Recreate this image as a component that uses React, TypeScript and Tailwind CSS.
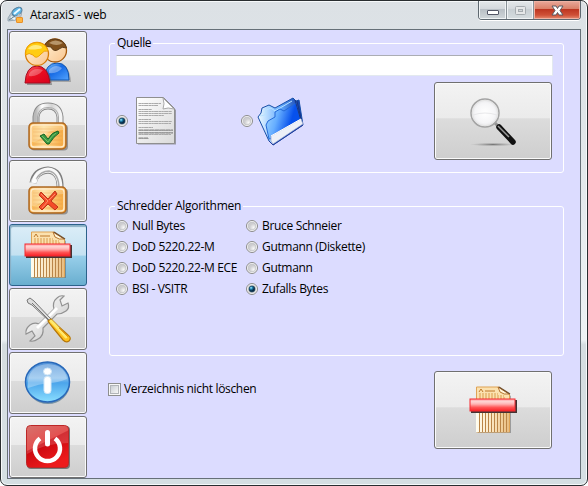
import React, { useState } from "react";

const silver =
  "border-[#707070] bg-[linear-gradient(to_bottom,#f3f3f3_0%,#ebebeb_46%,#dcdcdc_47%,#cecece_100%)] shadow-[inset_0_0_0_1px_#fafafa]";
const pressed =
  "border-[#2c628b] bg-[linear-gradient(to_bottom,#dceef8_0%,#c4e1f1_50%,#98cfea_52%,#69aecf_100%)] shadow-[inset_1px_2px_1px_#8ab0c5]";

function Users() {
  return (
    <svg width="48" height="50" viewBox="0 0 48 50">
      <defs>
        <linearGradient id="blueBody" x1="0" y1="0" x2="1" y2="1">
          <stop stopColor="#8fd0ff" /><stop offset=".45" stopColor="#1569e4" /><stop offset="1" stopColor="#53a4ff" />
        </linearGradient>
        <linearGradient id="redBody" x1="0" y1="0" x2="1" y2="1">
          <stop stopColor="#ff6a70" /><stop offset=".45" stopColor="#ea0f22" /><stop offset="1" stopColor="#d8001d" />
        </linearGradient>
        <linearGradient id="face" x1="0" y1="0" x2="1" y2="1">
          <stop stopColor="#fff3d8" /><stop offset="1" stopColor="#f9c48d" />
        </linearGradient>
      </defs>
      <path d="M20 43Q21 25 33 25T46 43Z" fill="#777" opacity=".5" transform="translate(1 1)" />
      <path d="M20 42Q21 25 33 25T45 42Z" fill="url(#blueBody)" stroke="#1054ae" />
      <path d="M25 32Q31 25 38 30Q34 36 25 35Z" fill="#fff" opacity=".35" />
      <circle cx="31" cy="12.500" r="11.500" fill="url(#face)" stroke="#a65a0c" strokeWidth="1.300" />
      <path d="M20 9Q23 1 31 1Q41 2 42.500 10Q38 8 35 11Q30 15 27 9Q23 8 20 9Z" fill="#80501c" stroke="#5c3c1b" />
      <path d="M25 5Q31 0 39 5Q33 9 25 5Z" fill="#ceb28b" opacity=".7" />
      <path d="M2 46Q3 28 14 28T27 46Z" fill="#555" opacity=".5" transform="translate(1 1)" />
      <path d="M1 45Q2 28 13 28T26 45Z" fill="url(#redBody)" stroke="#a40d20" />
      <path d="M5 36Q9 29 19 32Q14 39 5 38Z" fill="#fff" opacity=".28" />
      <circle cx="13" cy="16" r="11.500" fill="url(#face)" stroke="#d77b08" strokeWidth="1.300" />
      <path d="M1.500 17Q1 5 13 4.500Q22 5 24 13Q20 12 17 16Q12 22 9 17Q5 14 1.500 17Z" fill="#ffcc12" stroke="#f1a100" />
      <path d="M4 11Q8 5 17 8Q20 11 14 11Q8 12 4 11Z" fill="#fff7ac" opacity=".7" />
    </svg>
  );
}

function Lock({ open = false }: { open?: boolean }) {
  return (
    <svg width="42" height="50" viewBox="0 0 42 50">
      <defs>
        <linearGradient id="gold" x1="0" y1="0" x2="1" y2="0">
          <stop stopColor="#f8b049" /><stop offset=".4" stopColor="#ffdf9b" /><stop offset="1" stopColor="#f5a437" />
        </linearGradient>
        <linearGradient id="silverRod" x1="0" y1="0" x2="1" y2="0">
          <stop stopColor="#b9b9b9" /><stop offset=".25" stopColor="#fff" /><stop offset=".65" stopColor="#d4d4d4" /><stop offset="1" stopColor="#f4f4f4" />
        </linearGradient>
      </defs>
      {open ? (
        <>
          <path d="M6 17Q8 5 21 4Q34 5 33 23" fill="none" stroke="#7e7e7e" strokeWidth="7" />
          <path d="M7 17Q9 5 21 4Q33 5 33 23" fill="none" stroke="#f8f8f8" strokeWidth="5" />
          <path d="M9 13Q14 5 22 5Q32 7 32 23" fill="none" stroke="#aaa" strokeWidth="1.500" />
          <path d="M3 17Q5 10 10 8Q10 12 8 17Z" fill="#fff" opacity=".6" />
        </>
      ) : (
        <>
          <path d="M9 24V15Q10 4 21 4Q32 4 33 15V24" fill="none" stroke="#8b8b8b" strokeWidth="7" />
          <path d="M9 24V15Q10 4 21 4Q32 4 33 15V24" fill="none" stroke="url(#silverRod)" strokeWidth="5" />
          <path d="M10.500 21V15Q11.500 5.500 21 5.500Q31 5.500 31.500 15V21" fill="none" stroke="#aaa" />
        </>
      )}
      <rect x="3.500" y="22.500" width="37.500" height="26" rx="4" fill="#777" opacity=".7" />
      <rect x="2" y="21" width="37" height="26" rx="4" fill="url(#gold)" stroke="#ad6823" strokeWidth="1.500" />
      <rect x="4" y="23" width="33" height="22" rx="3" fill="none" stroke="#ffeccc" strokeWidth="1.500" />
      <path d="M6 27H35M6 30H35M6 34H35M6 38H35M6 42H35" stroke="#eda14b" strokeWidth="1" opacity=".65" />
      <path d="M5 24H36V28Q22 27 16 34Q11 40 5 40Z" fill="#fff5d8" opacity=".3" />
      {open ? (
        <>
          <path d="M14 26L21 33L28 25L30 28L24 35L31 41L28 44L21 38L15 44L12 41L18 35L12 29Z" fill="#f44b29" stroke="#bd3418" strokeLinejoin="round" />
          <path d="M14 28L21 35L15 42M28 28L22 34" stroke="#ff8b66" fill="none" />
        </>
      ) : (
        <>
          <path d="M13 34L17 32L21 37Q25 30 31 29L32 31Q27 34 22 42L20 42Z" fill="#399b45" stroke="#176322" strokeLinejoin="round" />
          <path d="M15 34L21 40Q25 33 29 31" stroke="#79bd65" fill="none" />
        </>
      )}
    </svg>
  );
}

function Shredder() {
  return (
    <svg width="48" height="48" viewBox="0 0 48 48">
      <defs>
        <linearGradient id="redBar" x1="0" y1="0" x2="0" y2="1">
          <stop stopColor="#ff9c9e" /><stop offset=".22" stopColor="#ffd4d3" /><stop offset=".42" stopColor="#ffb3b3" /><stop offset=".7" stopColor="#ff5555" /><stop offset="1" stopColor="#f91f25" />
        </linearGradient>
        <linearGradient id="shreds"><stop stopColor="#fffdf0" /><stop offset=".5" stopColor="#fae5bf" /><stop offset="1" stopColor="#e9bd80" /></linearGradient>
      </defs>
      <path d="M9 2H30L42 10V47H9Z" fill="#555" opacity=".45" />
      <path d="M7.500 1H29.500L40.500 8V46H7.500Z" fill="#fbe1af" stroke="#dfa354" />
      <path d="M29 1L31 6Q35 9 40 8Z" fill="#fff5d8" stroke="#b7752e" />
      <path d="M30 1L41 8" stroke="#725030" strokeWidth="1.300" />
      <path d="M10 6L12 3L14 6M16 5H26" fill="none" stroke="#bd792b" />
      <path d="M10 8H29M10 10H35M10 12H36" fill="none" stroke="#d99c4b" strokeDasharray="2 1" />
      <rect x="7" y="26" width="33" height="20" fill="url(#shreds)" />
      <path d="M10.500 27V46M13.500 27V46M16.500 27V46M19.500 27V46M22.500 27V46M25.500 27V46M28.500 27V46M31.500 27V46M34.500 27V46M37.500 27V46" stroke="#ba8547" strokeWidth="1" />
      <rect x="2" y="14" width="46" height="13" fill="#443332" />
      <rect x="1" y="13" width="45" height="12" fill="url(#redBar)" stroke="#f42b31" />
    </svg>
  );
}

function Tools() {
  return (
    <svg width="48" height="50" viewBox="0 0 48 50">
      <defs><linearGradient id="steel" x1="0" y1="0" x2="1" y2="1"><stop stopColor="#fff" /><stop offset=".5" stopColor="#e5e5e5" /><stop offset="1" stopColor="#b5b5b5" /></linearGradient></defs>
      <path d="M30 15Q28 8 33 4Q36 1 40 2L36 6L38 12L44 9Q46 14 42 17Q38 20 33 20L19 34Q20 42 14 45Q10 48 6 47L11 42L8 37L2 40Q1 35 6 31Q10 28 15 30Z" fill="url(#steel)" stroke="#929292" strokeWidth="1.200" />
      <path d="M13 34L33 14" stroke="#fff" strokeWidth="3" />
      <path d="M3 6L6 4L10 7L27 25L25 27L8 11L4 9Z" fill="#ddd" stroke="#777" />
      <path d="M8 9L26 27" stroke="#777" />
      <path d="M24 27L27 25L31 29L34 32L44 41Q48 44 45 47Q42 49 39 46L30 35L26 30Z" fill="#ffc11d" stroke="#b77808" strokeWidth="1.200" />
      <path d="M27 27L31 31L42 43" fill="none" stroke="#ffe96d" strokeWidth="3" strokeLinecap="round" />
      <path d="M35 34L44 43" stroke="#e99a10" />
    </svg>
  );
}

function Info() {
  return (
    <svg width="48" height="48" viewBox="0 0 48 48">
      <defs><linearGradient id="infoBlue" x1="0" y1="0" x2="0" y2="1"><stop stopColor="#4b8cd5" /><stop offset=".4" stopColor="#83bcec" /><stop offset=".52" stopColor="#4ca5eb" /><stop offset="1" stopColor="#8bdfff" /></linearGradient></defs>
      <ellipse cx="24" cy="24.500" rx="22" ry="20.500" fill="#7893a5" />
      <ellipse cx="23.500" cy="23" rx="22" ry="20" fill="url(#infoBlue)" stroke="#2868b9" strokeWidth="1.500" />
      <path d="M4 22Q6 6 24 5Q41 6 43 20Q33 24 25 24Q15 25 4 29Z" fill="#fff" opacity=".3" />
      <ellipse cx="23.500" cy="12.500" rx="4" ry="3.500" fill="#fff" stroke="#d0e6f7" />
      <rect x="20" y="17.500" width="7" height="17" rx="3" fill="#fff" stroke="#d0e6f7" />
    </svg>
  );
}

function Power() {
  return (
    <svg width="46" height="46" viewBox="0 0 46 46">
      <defs><linearGradient id="powerRed" x1="0" y1="0" x2=".5" y2="1"><stop stopColor="#cf5751" /><stop offset=".48" stopColor="#df3130" /><stop offset=".5" stopColor="#c9080f" /><stop offset="1" stopColor="#ed1b1c" /></linearGradient></defs>
      <rect x="2" y="2" width="43" height="43" rx="4" fill="#777" />
      <rect x="1.500" y="1.500" width="42" height="42" rx="4" fill="url(#powerRed)" stroke="#bc2727" />
      <path d="M2 5Q2 2 5 2H40Q43 2 43 5V19Q21 19 2 30Z" fill="#fff" opacity=".16" />
      <path d="M15 14.500A12.500 12.500 0 1 0 30 14.500" fill="none" stroke="#fff" strokeWidth="4.500" />
      <path d="M22.500 8.500V20" stroke="#fff" strokeWidth="5" strokeLinecap="round" />
    </svg>
  );
}

function Paper() {
  return (
    <svg width="41" height="48" viewBox="0 0 41 48">
      <defs><linearGradient id="paperGray" x1="0" y1="0" x2="1" y2="1"><stop stopColor="#fff" /><stop offset="1" stopColor="#dadada" /></linearGradient></defs>
      <path d="M2 2H29L40 13V47.500H2Z" fill="#777" opacity=".65" />
      <path d="M.5.5H27.500L38.500 11.500V46.500H.5Z" fill="url(#paperGray)" stroke="#8f8f8f" />
      <path d="M27 1Q29 7 27 12Q32 10 38 12Z" fill="#fff" stroke="#aaa" />
      <path d="M2.500 6.500H25M2.500 8.500H22M2.500 12.500H16M2.500 14.500H36M2.500 16.500H36M2.500 18.500H28M2.500 22.500H15M2.500 24.500H36M2.500 26.500H35M2.500 30.500H17M2.500 33.500H37M2.500 35.500H37M2.500 37.500H35M2.500 41.500H13" stroke="#aaa" strokeWidth="1.200" strokeDasharray="3 .3 2 .3 4 .4" />
      <path d="M2.500 33H37M2.500 36H37M2.500 41H12" stroke="#888" strokeWidth="1" strokeDasharray="5 .4" />
    </svg>
  );
}

function Folder() {
  return (
    <svg width="48" height="49" viewBox="0 0 48 49">
      <defs>
        <linearGradient id="folderFront" x1="0" y1="0" x2="1" y2=".3"><stop stopColor="#a9dcff" /><stop offset=".4" stopColor="#66aeff" /><stop offset=".8" stopColor="#0751ec" /></linearGradient>
        <linearGradient id="folderBack" x1="0" y1="0" x2="1" y2="0"><stop stopColor="#edfaff" /><stop offset=".5" stopColor="#61aaff" /><stop offset="1" stopColor="#062c9f" /></linearGradient>
      </defs>
      <path d="M1 20L4 16L5 11L12 8L18 11L36 1L39 4L42 3L46 28L16 48L12 44Z" fill="url(#folderBack)" stroke="#174fa7" />
      <path d="M3 19L8 18L9 13L14 11L18 14L35 4" fill="none" stroke="#b8e3ff" />
      <path d="M12 42L9 28L11 24L18 20L18 15L23 12L27 14L39 6L44 24L18 41Z" fill="url(#folderFront)" stroke="#2469d7" />
      <path d="M38 3L45 27M40 4L44 22" stroke="#183785" />
      <path d="M14 39L44 22L46 27L16 47L14 44Z" fill="#edf0f7" stroke="#9caad1" strokeWidth=".8" />
      <path d="M14 39L44 22" stroke="#fff" />
      <path d="M12 44L16 48L46 28" fill="none" stroke="#253e9d" />
    </svg>
  );
}

function Magnifier() {
  return (
    <svg width="50" height="50" viewBox="0 0 50 50" className="ml-[3px] mt-[2px]">
      <defs>
        <radialGradient id="glass"><stop stopColor="#fff" /><stop offset=".7" stopColor="#f5f5f7" /><stop offset="1" stopColor="#e5e5e7" /></radialGradient>
        <radialGradient id="glassShadow"><stop stopColor="#777" /><stop offset="1" stopColor="#999" stopOpacity="0" /></radialGradient>
      </defs>
      <ellipse cx="23" cy="47.500" rx="23" ry="1.800" fill="url(#glassShadow)" />
      <path d="M25 26L30 31" stroke="#929292" strokeWidth="3" />
      <path d="M29 30L43 45" stroke="#111" strokeWidth="5.500" strokeLinecap="round" />
      <path d="M28 29L39 40" stroke="#999" strokeWidth="1.500" />
      <circle cx="15" cy="16" r="14" fill="url(#glass)" stroke="#a3a3a3" strokeWidth="1.500" />
      <circle cx="15" cy="16" r="12.700" fill="none" stroke="#e4e4e4" />
      <path d="M3 18Q15 14 27 18" fill="none" stroke="#e8e8ea" />
    </svg>
  );
}

function Radio({ selected, label, onSelect, children }: { selected: boolean; label?: string; onSelect: () => void; children?: React.ReactNode }) {
  return (
    <button role="radio" aria-checked={selected} onClick={onSelect} className="flex h-[21px] items-center whitespace-nowrap text-left">
      <svg width="12" height="12" viewBox="0 0 12 12" className="shrink-0">
        <defs>
          <radialGradient id="radioGray" cx=".7" cy=".7"><stop stopColor="#f8f8f8" /><stop offset="1" stopColor="#cdcdd0" /></radialGradient>
          <radialGradient id="radioBlue" cx=".35" cy=".3"><stop stopColor="#b7eeff" /><stop offset=".45" stopColor="#1e89b8" /><stop offset="1" stopColor="#092d49" /></radialGradient>
        </defs>
        <circle cx="6" cy="6" r="5.500" fill="#fbfbfb" stroke="#8b8b8b" />
        <circle cx="6" cy="6" r="3.900" fill="url(#radioGray)" stroke="#bfc0c3" strokeWidth=".7" />
        {selected && <circle cx="6" cy="6" r="3" fill="url(#radioBlue)" stroke="#163b55" strokeWidth=".6" />}
      </svg>
      {label ? <span className="ml-1">{label}</span> : children}
    </button>
  );
}

const entries = [
  { name: "Benutzer", icon: <Users /> },
  { name: "Verschlüsseln", icon: <Lock /> },
  { name: "Entschlüsseln", icon: <Lock open /> },
  { name: "Schreddern", icon: <Shredder /> },
  { name: "Einstellungen", icon: <Tools /> },
  { name: "Information", icon: <Info /> },
  { name: "Beenden", icon: <Power /> },
];

export default function App() {
  const [page, setPage] = useState(3);
  const [source, setSource] = useState(0);
  const [algorithm, setAlgorithm] = useState("Zufalls Bytes");
  const [keep, setKeep] = useState(false);
  const algorithms = ["Null Bytes", "DoD 5220.22-M", "DoD 5220.22-M ECE", "BSI - VSITR", "Bruce Schneier", "Gutmann (Diskette)", "Gutmann", "Zufalls Bytes"];
  return (
    <div className="h-[486px] w-[588px] bg-white font-['Open_Sans','Noto_Sans',sans-serif] text-[12px] leading-4 tracking-[-0.33px] text-black">
      <div className="flex h-full flex-col rounded-[7px] border border-[#292d30] bg-[linear-gradient(to_bottom,#dce1e5_0%,#dfe5e8_25%,#edf2f4_70%,#d5dde0_71%,#d5dfe3_100%)] px-[6px] pb-[6px] shadow-[inset_0_0_0_1px_#f6f9fa]">
        <header className="flex h-7 shrink-0 items-start justify-between">
          <div className="flex h-7 items-center">
            <svg width="18" height="18" viewBox="0 0 18 18">
              <path d="M1 12L6 4L12 1L15 4L14 10L9 14L1 15Z" fill="#b7c4cd" stroke="#98a9b5" />
              <ellipse cx="10" cy="5.500" rx="5.500" ry="3.500" transform="rotate(-35 10 5.500)" fill="#5eb6e5" stroke="#547e9d" />
              <path d="M7 8L13 3M4 11L8 13" stroke="#edfaff" strokeWidth="2" /><path d="M2 14L8 10" stroke="#637d8d" />
              <rect x="9.500" y="11.500" width="6" height="5" rx=".5" fill="#ffb640" stroke="#e8912b" />
              <path d="M11 11V9Q12.500 7 14 9V11" fill="none" stroke="#c7c7c7" />
            </svg>
            <span className="ml-[5px] tracking-[-0.22px]">AtaraxiS - web</span>
          </div>
          <div className="flex h-[19px] w-[103px] overflow-hidden rounded-b-[4px] border border-t-0 border-[#5e6870] shadow-[0_1px_0_#fff]">
            <button aria-label="Minimieren" className="flex w-[28px] items-center justify-center border-r border-[#889197] bg-[linear-gradient(to_bottom,#e4e8ea_0%,#d3d8dc_45%,#b8bfc5_46%,#d1d7da_100%)] pt-[5px] shadow-[inset_0_0_0_1px_#f0f3f5]">
              <svg width="12" height="5" viewBox="0 0 12 5"><rect x=".5" y=".5" width="11" height="4" rx=".5" fill="#fff" stroke="#535666" /></svg>
            </button>
            <button aria-label="Maximieren" className="flex w-[27px] items-center justify-center border-r border-[#889197] bg-[linear-gradient(to_bottom,#e4e8ea_0%,#d3d8dc_45%,#c8cfd3_46%,#d6dde0_100%)] shadow-[inset_0_0_0_1px_#f0f3f5]">
              <svg width="11" height="9" viewBox="0 0 11 9"><rect x=".5" y=".5" width="10" height="8" rx="1" fill="#e5e7e8" stroke="#a5abaf" /><rect x="3.500" y="3.500" width="4" height="2" fill="#d2d7d9" stroke="#a5abaf" /></svg>
            </button>
            <button aria-label="Schließen" className="flex flex-1 items-center justify-center bg-[linear-gradient(to_bottom,#e9a99b_0%,#da8068_44%,#bd3520_46%,#cf5037_78%,#e78d72_100%)] shadow-[inset_0_0_0_1px_#efb2a3]">
              <svg width="13" height="11" viewBox="0 0 13 11"><path d="M1 1H5L6.500 3.500L8 1H12L9 5.500L12 10H8L6.500 7.500L5 10H1L4 5.500Z" fill="#fff" stroke="#5b5960" /></svg>
            </button>
          </div>
        </header>
        <div className="flex min-h-0 flex-1 overflow-hidden border border-[#667078] bg-[#dcdcff] pl-px pt-px">
          <nav className="flex w-[78px] shrink-0 flex-col gap-[2px]">
            {entries.map((entry, i) => (
              <button key={entry.name} aria-label={entry.name} onClick={() => setPage(i)} className={`flex w-full shrink-0 items-center justify-center rounded-[3px] border ${i === 0 ? "h-[63px]" : "h-[62px]"} ${page === i ? pressed : silver}`}>
                {entry.icon}
              </button>
            ))}
          </nav>
          <main className="ml-[21px] w-[456px] pt-[4px]">
            <fieldset className="ml-px h-[138px] w-[455px] rounded-[3px] border border-white">
              <legend className="ml-[5px] h-[17px] px-[2px]">Quelle</legend>
              <input aria-label="Quelle" className="ml-[6px] mt-[3px] block h-[21px] w-[437px] rounded-[1px] border border-[#e3e9ef] border-t-[#abadb3] bg-white px-1 outline-none" />
              <div className="flex">
                <div className="ml-[6px] mt-[21px] flex h-[48px] w-[125px] items-center">
                  <Radio selected={source === 0} onSelect={() => setSource(0)}><span className="ml-[8px]"><Paper /></span></Radio>
                </div>
                <div className="mt-[21px] flex h-[48px] w-[193px] items-center">
                  <Radio selected={source === 1} onSelect={() => setSource(1)}><span className="ml-[4px]"><Folder /></span></Radio>
                </div>
                <button aria-label="Suchen" className={`mt-[6px] flex h-[78px] w-[118px] items-center justify-center rounded-[3px] border ${silver}`}><Magnifier /></button>
              </div>
            </fieldset>
            <fieldset className="ml-px mt-[25px] h-[158px] w-[455px] rounded-[3px] border border-white">
              <legend className="ml-[5px] h-[17px] px-[2px] tracking-[-0.28px]">Schredder Algorithmen</legend>
              <div className="ml-[6px] grid w-[300px] grid-flow-col grid-cols-[130px_170px] grid-rows-[repeat(4,21px)]">
                {algorithms.map((name) => <Radio key={name} label={name} selected={algorithm === name} onSelect={() => setAlgorithm(name)} />)}
              </div>
            </fieldset>
            <div className="mt-[15px] flex justify-between pr-[12px]">
              <button role="checkbox" aria-checked={keep} onClick={() => setKeep(!keep)} className="mt-[10px] flex h-4 items-center whitespace-nowrap">
                <span className="flex h-[13px] w-[13px] items-center justify-center border border-[#8e8f8f] bg-[#f7f7f7]"><span className="flex h-[9px] w-[9px] items-center justify-center border border-[#b2b5b9] bg-[linear-gradient(135deg,#cbcfd5,#f7f7f7)] text-[10px]">{keep ? "✓" : ""}</span></span>
                <span className="ml-[3px]">Verzeichnis nicht löschen</span>
              </button>
              <button aria-label="Schreddern starten" className={`flex h-[78px] w-[118px] items-center justify-center rounded-[3px] border ${silver}`}><Shredder /></button>
            </div>
          </main>
        </div>
      </div>
    </div>
  );
}
